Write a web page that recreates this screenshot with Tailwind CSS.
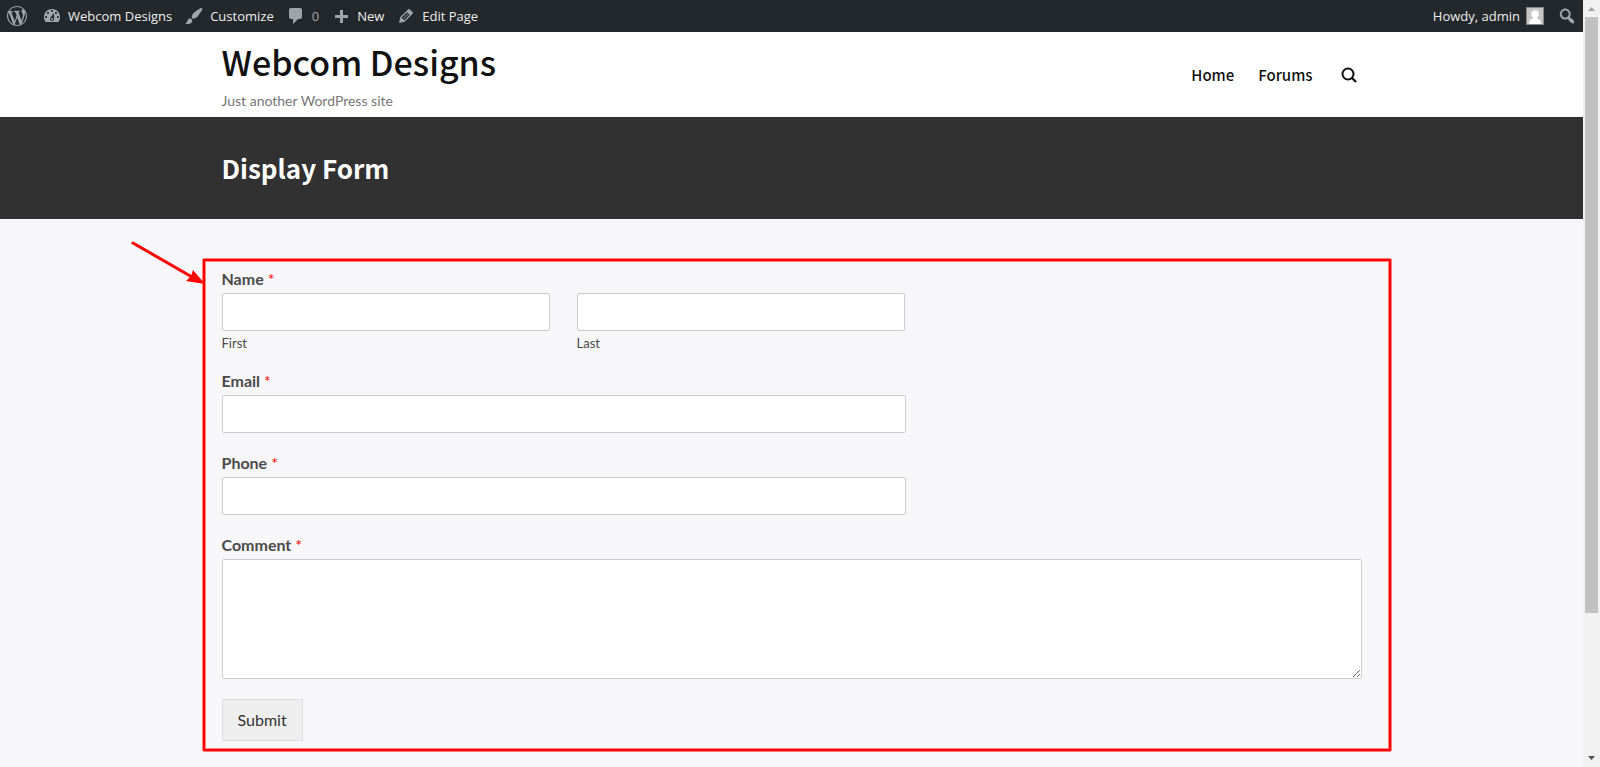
<!DOCTYPE html>
<html lang="en">
<head>
<meta charset="utf-8">
<meta name="viewport" content="width=device-width, initial-scale=1">
<title>Display Form – Webcom Designs</title>
<script src="https://cdn.jsdelivr.net/npm/@tailwindcss/browser@4"></script>
</head>
<body class="flex h-screen overflow-hidden bg-[#f7f7f9] font-['Lato',sans-serif] text-[#4a4a4a]">

<div class="flex-1 min-w-0 overflow-hidden">
  <nav aria-label="Toolbar" class="flex h-8 items-center justify-between bg-[#23282d] pl-[7px] pr-[6px] font-['Open_Sans',sans-serif] text-[13px] leading-8 text-[#eee]">
    <div class="flex items-center gap-3">
      <a href="#" aria-label="About WordPress" class="pr-[3px] text-[#a0a5aa]"><svg class="size-5" viewBox="0 0 20 20" fill="currentColor"><path d="M20 10c0-5.51-4.49-10-10-10C4.48 0 0 4.49 0 10c0 5.52 4.48 10 10 10 5.51 0 10-4.48 10-10zM7.78 15.37L4.37 6.22c.55-.02 1.17-.08 1.17-.08.5-.06.44-1.13-.06-1.11 0 0-1.45.11-2.37.11-.18 0-.37 0-.58-.01C4.12 2.69 6.87 1.11 10 1.11c2.33 0 4.45.87 6.05 2.34-.68-.11-1.65.39-1.65 1.58 0 .74.45 1.36.9 2.1.35.61.55 1.36.55 2.46 0 1.49-1.4 5-1.4 5l-3.03-8.37c.54-.02.82-.17.82-.17.5-.05.44-1.25-.06-1.22 0 0-1.44.12-2.38.12-.87 0-2.33-.12-2.33-.12-.5-.03-.56 1.2-.06 1.22l.92.08 1.26 3.41zM17.41 10c.24-.64.74-1.87.43-4.25.7 1.29 1.05 2.71 1.05 4.25 0 3.29-1.73 6.24-4.4 7.78.97-2.59 1.94-5.2 2.92-7.78zM6.1 18.09C3.12 16.65 1.11 13.53 1.11 10c0-1.3.23-2.48.72-3.59C3.25 10.3 4.67 14.2 6.1 18.09zm4.03-6.63l2.58 6.98c-.86.29-1.76.45-2.71.45-.79 0-1.57-.11-2.29-.33.81-2.38 1.62-4.74 2.42-7.1z"/></svg></a>
      <a href="#" class="flex items-center gap-[6px]"><svg class="size-5 text-[#a0a5aa]" viewBox="0 0 20 20" fill="currentColor"><path d="M3.76 16h12.48A7.998 7.998 0 0 0 10 3a7.998 7.998 0 0 0-6.24 13zM10 4c.55 0 1 .45 1 1s-.45 1-1 1-1-.45-1-1 .45-1 1-1zM6 6c.55 0 1 .45 1 1s-.45 1-1 1-1-.45-1-1 .45-1 1-1zm8 0c.55 0 1 .45 1 1s-.45 1-1 1-1-.45-1-1 .45-1 1-1zm-5.37 5.55L12 7v6c0 1.1-.9 2-2 2s-2-.9-2-2c0-.57.24-1.08.63-1.45zM4 10c.55 0 1 .45 1 1s-.45 1-1 1-1-.45-1-1 .45-1 1-1zm12 0c.55 0 1 .45 1 1s-.45 1-1 1-1-.45-1-1 .45-1 1-1zm-5 3c0-.55-.45-1-1-1s-1 .45-1 1 .45 1 1 1 1-.45 1-1z"/></svg>Webcom Designs</a>
      <a href="#" class="flex items-center gap-[6px]"><svg class="size-5 text-[#a0a5aa]" viewBox="0 0 20 20" fill="currentColor"><path d="M18.33 3.57s.27-.8-.31-1.36c-.53-.52-1.22-.24-1.22-.24-.61.3-5.76 3.47-7.67 5.57-.86.96-2.06 3.79-1.09 4.82.92.98 3.96-.17 4.79-1 2.06-2.06 5.21-7.17 5.5-7.79zM1.4 17.65c2.37-1.56 1.46-3.41 3.23-4.64.93-.65 2.22-.62 3.08.29.63.67.8 2.57-.16 3.46-1.57 1.45-4 1.55-6.15.89z"/></svg>Customize</a>
      <a href="#" class="flex items-center gap-[6px] text-[#a0a5aa]"><svg class="size-5" viewBox="0 0 20 20" fill="currentColor"><path d="M5 2h9c1.1 0 2 .9 2 2v7c0 1.1-.9 2-2 2h-2l-5 5v-5H5c-1.1 0-2-.9-2-2V4c0-1.1.9-2 2-2z"/></svg>0</a>
      <a href="#" class="flex items-center gap-[6px]"><svg class="size-5 text-[#a0a5aa]" viewBox="0 0 20 20" fill="currentColor"><path d="M17 9v3h-5v5H9v-5H4V9h5V4h3v5h5z"/></svg>New</a>
      <a href="#" class="flex items-center gap-[6px]"><svg class="size-5 text-[#a0a5aa]" viewBox="0 0 20 20" fill="currentColor"><path d="M13.89 3.39l2.71 2.72c.46.46.42 1.24.03 1.64l-8.01 8.02-5.56 1.16 1.16-5.58s7.6-7.63 7.99-8.03c.39-.39 1.22-.39 1.68.07zm-2.73 2.79l-5.59 5.61 1.11 1.11 5.54-5.65zm-2.97 8.23l5.58-5.6-1.07-1.08-5.59 5.6z"/></svg>Edit Page</a>
    </div>
    <div class="flex items-center gap-[13px]">
      <a href="#" class="flex items-center gap-[6px]">Howdy, admin<svg class="size-[18px] border border-[#82878c] bg-[#c6c6c6]" viewBox="0 0 16 16" fill="#fff"><circle cx="8" cy="6" r="3.8"/><path d="M6 8h4v2.500c2.500.5 4 2 4 5.500H2c0-3.500 1.500-5 4-5.500z"/></svg></a>
      <button type="button" aria-label="Search" class="text-[#a0a5aa]"><svg class="size-5" viewBox="0 0 20 20" fill="currentColor"><path d="M12.140 4.180c1.870 1.870 2.110 4.750.72 6.890.12.1.22.21.36.31.2.16.47.36.81.59.34.24.56.39.66.47.42.31.73.57.94.78.32.32.6.65.84 1 .25.35.44.69.59 1.040.14.35.21.68.18 1-.02.32-.14.59-.36.81s-.49.34-.81.36c-.31.02-.65-.04-.99-.19-.35-.14-.7-.34-1.040-.59-.35-.24-.68-.52-1-.84-.21-.21-.47-.52-.77-.93-.1-.13-.25-.35-.47-.66-.22-.32-.4-.57-.56-.78-.16-.2-.29-.35-.44-.5-2.070 1.090-4.690.76-6.440-.98-2.140-2.150-2.140-5.640 0-7.780 2.150-2.150 5.630-2.150 7.780 0zm-1.410 6.360c1.360-1.370 1.360-3.580 0-4.950-1.370-1.370-3.590-1.370-4.950 0-1.370 1.370-1.370 3.580 0 4.950 1.360 1.370 3.580 1.370 4.950 0z"/></svg></button>
    </div>
  </nav>

  <header class="bg-white">
    <div class="mx-auto flex h-[85px] max-w-[1140px] items-center justify-between">
      <div>
        <a href="#" class="block font-['Noto_Sans_CJK_SC',sans-serif] text-[34px] font-medium leading-[46px] text-[#111]">Webcom Designs</a>
        <p class="mt-[6px] text-sm leading-5 text-[#777]">Just another WordPress site</p>
      </div>
      <nav aria-label="Primary" class="flex items-center gap-6 pr-[5px] font-['Noto_Sans_CJK_SC',sans-serif] text-[15px] font-medium leading-6 text-[#111]">
        <a href="#">Home</a>
        <a href="#">Forums</a>
        <button type="button" aria-label="Search" class="ml-1"><svg class="size-4" viewBox="0 0 16 16" fill="none" stroke="currentColor" stroke-width="2"><circle cx="7" cy="7" r="5.500"/><path d="M11 11l4 4" stroke-width="2.400"/></svg></button>
      </nav>
    </div>
  </header>

  <div class="bg-[#313131]">
    <div class="mx-auto flex h-[102px] max-w-[1140px] items-center">
      <h1 class="font-['Noto_Sans_CJK_SC',sans-serif] text-[26px] font-bold leading-9 text-white">Display Form</h1>
    </div>
  </div>

  <main class="mx-auto max-w-[1140px] pt-10">
    <form class="relative pb-[11px]">
      <fieldset class="py-[10px]">
        <legend class="float-left mb-1 w-full text-base font-bold leading-5">Name<span class="ml-1 font-normal text-[#f00]">*</span></legend>
        <div class="clear-both flex w-3/5 gap-[27px] pr-px">
          <div class="flex-1">
            <input id="first" type="text" class="block h-[38px] w-full rounded-xs border border-[#ccc] bg-white px-[10px]">
            <label for="first" class="mt-1 block text-[13px] leading-4">First</label>
          </div>
          <div class="flex-1">
            <input id="last" type="text" class="block h-[38px] w-full rounded-xs border border-[#ccc] bg-white px-[10px]">
            <label for="last" class="mt-1 block text-[13px] leading-4">Last</label>
          </div>
        </div>
      </fieldset>
      <div class="py-[10px]">
        <label for="email" class="mb-1 block text-base font-bold leading-5">Email<span class="ml-1 font-normal text-[#f00]">*</span></label>
        <input id="email" type="email" class="block h-[38px] w-3/5 rounded-xs border border-[#ccc] bg-white px-[10px]">
      </div>
      <div class="py-[10px]">
        <label for="phone" class="mb-1 block text-base font-bold leading-5">Phone<span class="ml-1 font-normal text-[#f00]">*</span></label>
        <input id="phone" type="tel" class="block h-[38px] w-3/5 rounded-xs border border-[#ccc] bg-white px-[10px]">
      </div>
      <div class="py-[10px]">
        <label for="comment" class="mb-1 block text-base font-bold leading-5">Comment<span class="ml-1 font-normal text-[#f00]">*</span></label>
        <textarea id="comment" class="block h-[120px] w-full resize rounded-xs border border-[#ccc] bg-white p-[10px]"></textarea>
      </div>
      <div class="pt-[10px]">
        <button type="button" class="h-[42px] border border-[#ddd] bg-[#eee] px-[15px] text-base text-[#333]">Submit</button>
      </div>

      <!-- Highlight frame and pointer around the form -->
      <div class="pointer-events-none absolute -left-5 -right-[30px] -top-px bottom-0 rounded-xs border border-[#ff8080]"><div class="h-full border-2 border-[#f00]"><div class="h-full border border-[#ff8080]"></div></div></div>
      <svg class="pointer-events-none absolute -left-[92px] -top-5 h-12 w-[76px]" viewBox="0 0 76 48" fill="#f00"><path d="M3 4L62 38" stroke="#f00" stroke-width="3" stroke-linecap="round"/><path d="M63 31L75 45L56 42L61 37Z"/></svg>
    </form>
  </main>
</div>

<!-- Page scrollbar -->
<div aria-hidden="true" class="flex w-[17px] flex-col items-center bg-[#f1f1f1]">
  <svg class="h-[17px] w-[17px] shrink-0" viewBox="0 0 17 17" fill="#a3a3a3"><path d="M5 11h7L8.500 7z"/></svg>
  <div class="flex-1 w-full px-[2px]"><div class="h-[596px] bg-[#c1c1c1]"></div></div>
  <svg class="h-[17px] w-[17px] shrink-0" viewBox="0 0 17 17" fill="#505050"><path d="M5 6h7L8.500 10z"/></svg>
</div>
</body>
</html>
